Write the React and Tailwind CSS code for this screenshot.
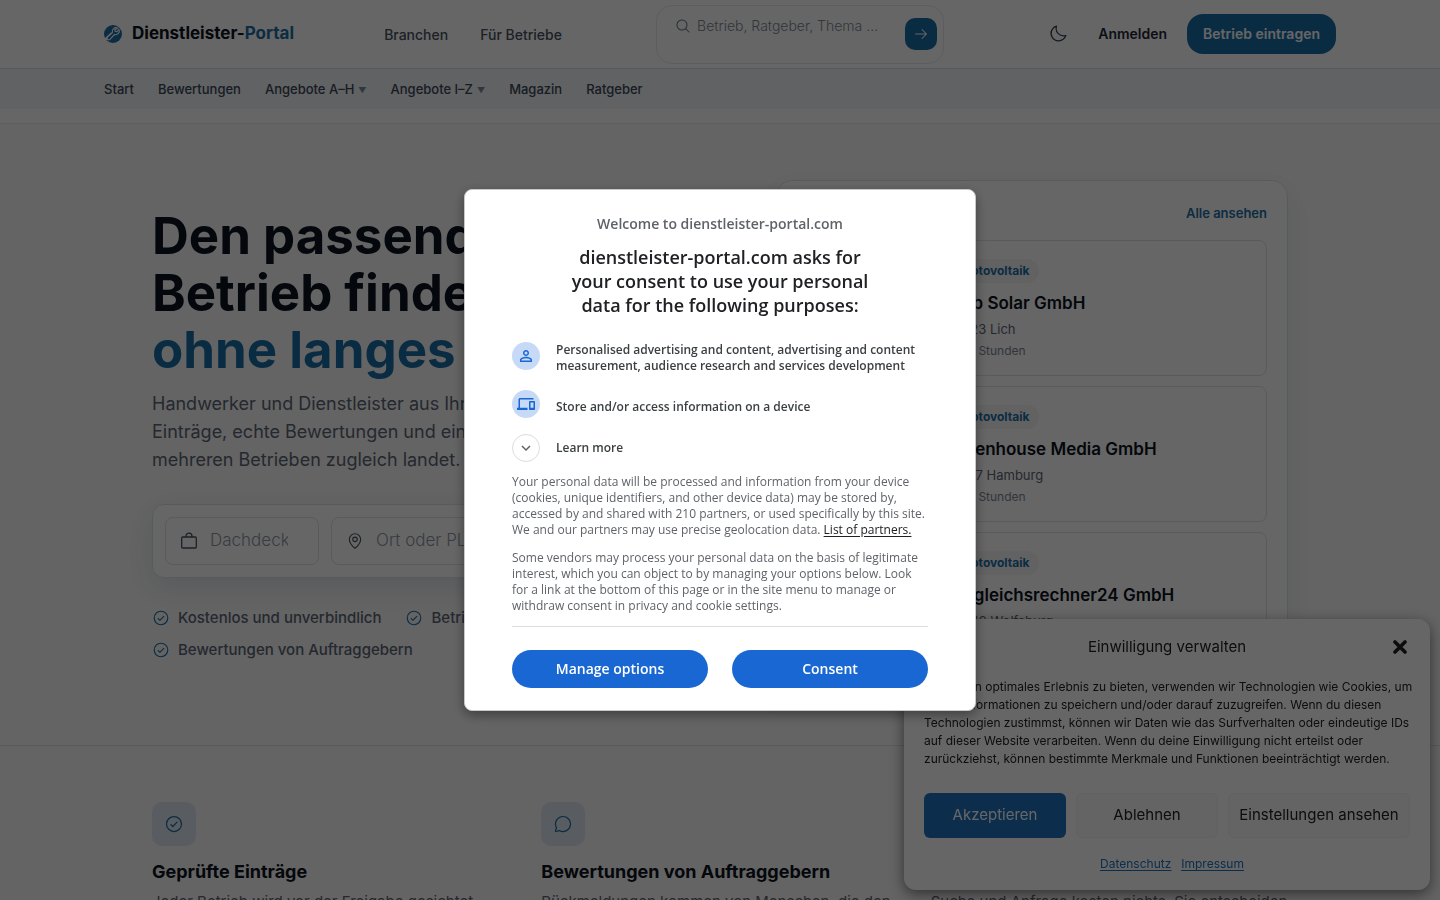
import React from 'react';
import {
    PiArrowRight,
    PiChatCircle,
    PiCheckCircle,
    PiHandshake,
    PiMagnifyingGlass,
    PiMapPin,
    PiMoon,
} from 'react-icons/pi';
import { MdOutlineDevices, MdPersonOutline, MdKeyboardArrowDown } from 'react-icons/md';

const subNav = [
    { label: 'Start' },
    { label: 'Bewertungen' },
    { label: 'Angebote A–H', menu: true },
    { label: 'Angebote I–Z', menu: true },
    { label: 'Magazin' },
    { label: 'Ratgeber' },
];

const companies = [
    { name: 'Web Solar GmbH', place: '35423 Lich' },
    { name: 'Greenhouse Media GmbH', place: '22147 Hamburg' },
    { name: 'Vergleichsrechner24 GmbH', place: '38442 Wolfsburg' },
];

const benefits = ['Kostenlos und unverbindlich', 'Betriebe aus der Region', 'Bewertungen von Auftraggebern'];

const features = [
    {
        icon: PiCheckCircle,
        title: 'Geprüfte Einträge',
        text: 'Jeder Betrieb wird vor der Freigabe gesichtet.',
    },
    {
        icon: PiChatCircle,
        title: 'Bewertungen von Auftraggebern',
        text: 'Rückmeldungen kommen von Menschen, die den Betrieb beauftragt haben.',
    },
    {
        icon: PiHandshake,
        title: 'Kostenlos anfragen',
        text: 'Suche und Anfrage kosten nichts. Sie entscheiden selbst, wen Sie beauftragen.',
    },
];

const Logo = () => (
    <svg viewBox="0 0 18 18" className="h-[18px] w-[18px] shrink-0" aria-hidden="true">
        <circle cx="9" cy="9" r="9" fill="#1d6fa5" />
        <path d="M1.5 14.5 8 8.6" stroke="#fff" strokeWidth="3" />
        <path
            d="M13.6 3.1a3.7 3.7 0 0 0-5.2 4.4L3.6 12a1.6 1.6 0 0 0 2.3 2.3l4.6-4.8a3.7 3.7 0 0 0 4.5-5l-2.2 2.2-1.6-.4-.4-1.6z"
            fill="#1d6fa5"
            stroke="#fff"
            strokeWidth="1.1"
        />
    </svg>
);

const Briefcase = () => (
    <svg viewBox="0 0 18 18" className="h-[18px] w-[18px] shrink-0" fill="none" stroke="currentColor" strokeWidth="1.3" aria-hidden="true">
        <rect x="1.7" y="5" width="14.6" height="11" rx="1" />
        <path d="M6 5V4.2A3 3 0 0 1 12 4.2V5" />
    </svg>
);

const Header = () => (
    <header className="bg-white">
        <div className="border-b border-[#dde3ea]">
            <div className="mx-auto flex h-[68px] max-w-[1280px] items-center justify-between px-6">
                <a href="#" className="flex w-[186px] items-center gap-2.5 text-[17px] font-bold whitespace-nowrap text-[#0b1220]">
                    <Logo />
                    <span>
                        Dienstleister-<span className="text-[#1d6fa5]">Portal</span>
                    </span>
                </a>
                <nav className="flex gap-8 pt-0.5 text-sm font-medium text-[#475262]">
                    <a href="#">Branchen</a>
                    <a href="#">Für Betriebe</a>
                </nav>
                <form className="flex h-[59px] w-72 items-center rounded-2xl border border-[#e3e8ee] bg-white pr-1.5 pl-[18px]">
                    <PiMagnifyingGlass className="mb-4 h-4 w-4 text-[#64748b]" />
                    <input
                        type="search"
                        aria-label="Suche"
                        placeholder="Betrieb, Ratgeber, Thema …"
                        className="mr-1 mb-4 ml-1.5 min-w-0 flex-1 bg-transparent text-sm outline-none placeholder:font-light placeholder:text-[#7c8796]"
                    />
                    <button
                        type="submit"
                        aria-label="Suchen"
                        className="flex h-8 w-8 items-center justify-center rounded-[10px] bg-[#1a6fa8] text-white"
                    >
                        <PiArrowRight className="h-4 w-4" />
                    </button>
                </form>
                <div className="flex items-center gap-5">
                    <button type="button" aria-label="Dunkles Design" className="flex h-10 w-10 items-center justify-center text-[#334155]">
                        <PiMoon className="h-5 w-5" />
                    </button>
                    <a href="#" className="text-sm font-semibold text-[#1e2937]">Anmelden</a>
                    <a href="#" className="flex h-10 items-center rounded-2xl bg-[#1a6fa8] px-4 text-sm font-semibold text-white">
                        Betrieb eintragen
                    </a>
                </div>
            </div>
        </div>
        <div className="bg-[#f0f4f8]">
            <nav className="mx-auto flex h-10 max-w-[1280px] items-center gap-6 px-6 pt-0.5 text-[13px] font-medium text-[#3c4858]">
                {subNav.map((item) => (
                    <a href="#" key={item.label} className="flex items-center gap-1">
                        {item.label}
                        {item.menu && <span className="text-[8px] text-[#7c8796]">▼</span>}
                    </a>
                ))}
            </nav>
        </div>
        <div className="h-[15px] border-b border-[#e6ebf0]" />
    </header>
);

const CompanyCard = ({ company }) => (
    <article className="flex h-[136px] gap-4 rounded-lg border border-[#dde3ea] bg-white p-4">
        <div className="w-[116px] shrink-0 rounded-md bg-[#eef3f7]" />
        <div>
            <span className="inline-block rounded-full bg-[#f4f5f7] px-2.5 py-1 text-xs leading-4 font-bold text-[#1d6fa5]">
                Photovoltaik
            </span>
            <h3 className="mt-2 text-[17px] leading-6 font-semibold text-[#0b1220]">{company.name}</h3>
            <p className="mt-1 text-[13px] leading-5 text-[#5b6675]">{company.place}</p>
            <p className="mt-0.5 text-xs leading-5 text-[#7c8796]">vor 3 Stunden</p>
        </div>
    </article>
);

const Hero = () => (
    <section className="border-b border-[#dde3ea] bg-[#fafafa]">
        <div className="mx-auto grid max-w-[1184px] grid-cols-[9fr_8fr] items-center gap-12 px-6 py-14">
            <div>
                <h1 className="text-[51px] leading-[57px] font-bold whitespace-nowrap text-[#0b1220]">
                    Den passenden
                    <br />
                    Betrieb finden,
                    <br />
                    <span className="text-[#1a6fa8]">ohne langes Suchen</span>
                </h1>
                <p className="mt-3 text-lg leading-[28px] whitespace-nowrap text-[#5b6675]">
                    Handwerker und Dienstleister aus Ihrer Region. Geprüfte
                    <br />
                    Einträge, echte Bewertungen und eine Anfrage, die bei
                    <br />
                    mehreren Betrieben zugleich landet.
                </p>
                <form className="mt-[30px] flex gap-3 rounded-xl border border-[#dde3ea] bg-white p-3 shadow-[0_10px_30px_rgba(15,40,70,0.12)]">
                    <label className="flex h-12 w-[154px] items-center gap-3 rounded-lg border border-[#dde3ea] px-3.5 text-[#475262]">
                        <Briefcase />
                        <input
                            type="text"
                            aria-label="Leistung"
                            placeholder="Dachdecker, Maler"
                            className="w-[78px] min-w-0 bg-transparent text-[17px] outline-none placeholder:font-light placeholder:text-[#8d97a5]"
                        />
                    </label>
                    <label className="flex h-12 w-[180px] items-center gap-3 rounded-lg border border-[#dde3ea] px-3.5 text-[#475262]">
                        <PiMapPin className="h-[18px] w-[18px] shrink-0" />
                        <input
                            type="text"
                            aria-label="Ort"
                            placeholder="Ort oder PLZ"
                            className="min-w-0 flex-1 bg-transparent text-[17px] outline-none placeholder:font-light placeholder:text-[#8d97a5]"
                        />
                    </label>
                    <button type="submit" className="flex-1 rounded-lg bg-[#1a6fa8] font-semibold text-white">
                        Betriebe finden
                    </button>
                </form>
                <ul className="mt-7 flex flex-wrap gap-x-6 gap-y-2 text-[15px] leading-6 font-medium text-[#5b6675]">
                    {benefits.map((benefit) => (
                        <li key={benefit} className="flex items-center gap-2">
                            <PiCheckCircle className="h-[18px] w-[18px] text-[#1d6fa5]" />
                            {benefit}
                        </li>
                    ))}
                </ul>
            </div>
            <aside className="rounded-2xl border border-[#dde3ea] bg-white p-5 shadow-[0_10px_30px_rgba(15,40,70,0.08)]">
                <div className="flex h-[39px] items-start justify-between">
                    <h2 className="text-base font-bold text-[#0b1220]">Neu im Portal</h2>
                    <a href="#" className="text-[13px] leading-6 font-semibold text-[#1d6fa5]">Alle ansehen</a>
                </div>
                <div className="flex flex-col gap-2.5">
                    {companies.map((company) => (
                        <CompanyCard key={company.name} company={company} />
                    ))}
                </div>
            </aside>
        </div>
    </section>
);

const Features = () => (
    <section className="bg-[#f9f9f9]">
        <div className="mx-auto grid max-w-[1184px] grid-cols-3 gap-8 px-6 py-14">
            {features.map(({ icon: Icon, title, text }) => (
                <div key={title}>
                    <div className="flex h-11 w-11 items-center justify-center rounded-[10px] bg-[#dfe8f2] text-[#1d6fa5]">
                        <Icon className="h-5 w-5" />
                    </div>
                    <h3 className="mt-3.5 text-lg leading-6 font-bold text-[#0b1220]">{title}</h3>
                    <p className="mt-1.5 text-[15px] leading-6 text-[#5b6675]">{text}</p>
                </div>
            ))}
        </div>
    </section>
);

const CookieBanner = () => (
    <div
        role="dialog"
        aria-label="Einwilligung verwalten"
        className="fixed right-2.5 bottom-2.5 w-[526px] rounded-xl bg-white px-5 pt-4 pb-4 text-[#222222] shadow-[0_4px_14px_rgba(0,0,0,0.5)]"
    >
        <div className="grid grid-cols-[20px_1fr_20px] items-center">
            <h2 className="col-start-2 text-center text-[15px] leading-6">Einwilligung verwalten</h2>
            <button type="button" aria-label="Schließen" className="flex justify-center">
                <svg viewBox="0 0 14 14" className="h-3.5 w-3.5" aria-hidden="true">
                    <path d="M2 2l10 10M12 2 2 12" stroke="#222222" strokeWidth="3.6" strokeLinecap="round" />
                </svg>
            </button>
        </div>
        <p className="mt-[19px] text-xs leading-[18px] whitespace-nowrap">
            Um dir ein optimales Erlebnis zu bieten, verwenden wir Technologien wie Cookies, um
            <br />
            Geräteinformationen zu speichern und/oder darauf zuzugreifen. Wenn du diesen
            <br />
            Technologien zustimmst, können wir Daten wie das Surfverhalten oder eindeutige IDs
            <br />
            auf dieser Website verarbeiten. Wenn du deine Einwilligung nicht erteilst oder
            <br />
            zurückziehst, können bestimmte Merkmale und Funktionen beeinträchtigt werden.
        </p>
        <div className="mt-[25px] grid grid-cols-[142px_142px_1fr] gap-2.5 text-[15px]">
            <button type="button" className="h-[45px] rounded-md bg-[#1e73be] text-white">Akzeptieren</button>
            <button type="button" className="h-[45px] rounded-md border border-[#f2f2f2] bg-[#f9f9f9]">Ablehnen</button>
            <button type="button" className="h-[45px] rounded-md border border-[#f2f2f2] bg-[#f9f9f9]">Einstellungen ansehen</button>
        </div>
        <div className="mt-4 flex justify-center gap-2.5 pl-2.5 text-xs leading-5 text-[#1e73be] underline underline-offset-2">
            <a href="#">Datenschutz</a>
            <a href="#">Impressum</a>
        </div>
    </div>
);

const ConsentDialog = () => (
    <div className="fixed inset-0 flex items-center justify-center bg-black/60 font-['Open_Sans',sans-serif]">
        <div
            role="dialog"
            aria-modal="true"
            className="w-[512px] rounded-lg border border-[#c8c8c8] bg-white px-[47px] pt-6 pb-[22px] shadow-[0_4px_12px_rgba(0,0,0,0.4)]"
        >
            <p className="text-center text-sm leading-5 font-semibold text-[#5f6368]">Welcome to dienstleister-portal.com</p>
            <h2 className="mx-auto mt-[11px] w-[304px] text-center text-lg leading-6 font-semibold text-[#202124]">
                dienstleister-portal.com asks for your consent to use your personal data for the following purposes:
            </h2>
            <ul className="mt-[25px] text-xs leading-4 font-semibold text-[#3c4043]">
                <li className="flex gap-4">
                    <span className="flex h-7 w-7 shrink-0 items-center justify-center rounded-full bg-[#c6daf7] text-[#1967d2]">
                        <MdPersonOutline className="h-[18px] w-[18px]" />
                    </span>
                    <span>Personalised advertising and content, advertising and content measurement, audience research and services development</span>
                </li>
                <li className="mt-4 flex items-center gap-4">
                    <span className="flex h-7 w-7 shrink-0 items-center justify-center rounded-full bg-[#c6daf7] text-[#1967d2]">
                        <MdOutlineDevices className="h-[18px] w-[18px]" />
                    </span>
                    <span className="pt-1.5">Store and/or access information on a device</span>
                </li>
            </ul>
            <button type="button" className="mt-4 flex items-center gap-4 text-xs font-semibold text-[#3c4043]">
                <span className="flex h-7 w-7 items-center justify-center rounded-full border border-[#dadce0]">
                    <MdKeyboardArrowDown className="h-[18px] w-[18px] text-[#5f6368]" />
                </span>
                Learn more
            </button>
            <p className="mt-3 text-xs leading-4 text-[#5f6368]">
                Your personal data will be processed and information from your device (cookies, unique identifiers, and other device
                data) may be stored by, accessed by and shared with 210 partners, or used specifically by this site. We and our
                partners may use precise geolocation data.{' '}
                <a href="#" className="text-[#202124] underline underline-offset-2">List of partners.</a>
            </p>
            <p className="mt-3 text-xs leading-4 text-[#5f6368]">
                Some vendors may process your personal data on the basis of legitimate interest, which you can object to by managing
                your options below. Look for a link at the bottom of this page or in the site menu to manage or withdraw consent in
                privacy and cookie settings.
            </p>
            <div className="mt-3 grid grid-cols-2 gap-6 border-t border-[#dadce0] pt-[23px] text-sm font-semibold text-white">
                <button type="button" className="h-[38px] rounded-full bg-[#1967d2]">Manage options</button>
                <button type="button" className="h-[38px] rounded-full bg-[#1967d2]">Consent</button>
            </div>
        </div>
    </div>
);

const App = () => (
    <div className="h-screen overflow-hidden bg-white font-['Inter',sans-serif]">
        <Header />
        <main>
            <Hero />
            <Features />
        </main>
        <CookieBanner />
        <ConsentDialog />
    </div>
);

export default App;
